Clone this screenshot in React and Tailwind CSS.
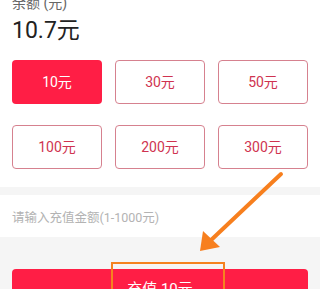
export default function App() {
  const amounts = ['10元', '30元', '50元', '100元', '200元', '300元']
  const selected = 0

  return (
    <div className="relative w-[320px] h-[289px] overflow-hidden bg-[#f5f5f5] font-['Roboto','Noto_Sans_CJK_SC',sans-serif]">
      {/* balance + presets */}
      <div className="bg-white px-3 pb-[18px]">
        <div className="-mt-[7px] text-[14px] leading-[20px] text-[#666]">余额 (元)</div>
        <div className="mt-[4px] text-[23px] leading-[28px] text-[#222]">10.7元</div>
        <div className="mt-[15px] grid grid-cols-3 gap-x-[13px] gap-y-[21px]">
          {amounts.map((a, i) => (
            <div
              key={a}
              className={
                i === selected
                  ? 'h-[44px] rounded-[4px] bg-[#ff1e45] text-white text-[14px] flex items-center justify-center'
                  : 'h-[44px] rounded-[4px] border border-[#d6818f] text-[#cf3350] text-[14px] flex items-center justify-center'
              }
            >
              {a}
            </div>
          ))}
        </div>
      </div>

      {/* custom amount */}
      <div className="mt-[8px] bg-white h-[42px] px-3 flex items-center pt-[4px]">
        <span className="text-[12.5px] text-[#b3b3b3]">请输入充值金额(1-1000元)</span>
      </div>

      {/* submit */}
      <div className="px-3 pt-[32px]">
        <div className="h-[44px] rounded-[4px] bg-[#ff1e45] flex justify-center pt-[9px]">
          <span className="text-white text-[15px] leading-[22px]">充值 10元</span>
        </div>
      </div>

      {/* annotation overlay */}
      <div className="absolute left-[111px] top-[262px] w-[114px] h-[40px] border-2 border-[#f5821f]" />
      <svg className="absolute left-0 top-0" width="320" height="289" viewBox="0 0 320 289">
        <line x1="281" y1="174" x2="209" y2="242" stroke="#f77f1e" strokeWidth="4" strokeLinecap="round" />
        <polygon points="200,251 203,231 220,247" fill="#f77f1e" />
      </svg>
    </div>
  )
}
